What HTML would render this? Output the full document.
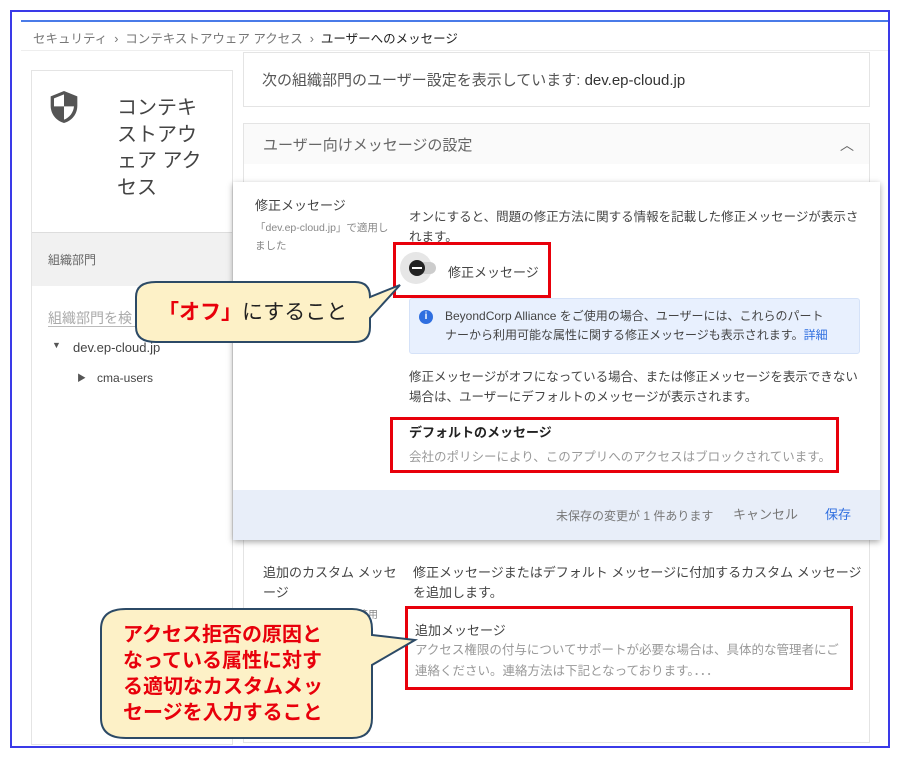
<!DOCTYPE html>
<html><head><meta charset="utf-8"><style>
*{margin:0;padding:0;box-sizing:border-box}
body{width:900px;height:760px;background:#fff;position:relative;overflow:hidden;font-family:"Liberation Sans","Noto Sans CJK JP",sans-serif;color:#3c4043}
.a{position:absolute;white-space:nowrap}
.card{position:absolute;background:#fff;border:1px solid #e4e4e4}
.red{position:absolute;border:3px solid #e8000b}
</style></head><body>
<div class="a" style="left:10px;top:10px;width:880px;height:738px;border:2px solid #3a3ae8"></div>
<div class="a" style="left:21px;top:20px;width:867px;height:2px;background:#4a7be8"></div>
<div class="a" style="left:33px;top:28px;font-size:12.5px;color:#777">セキュリティ &nbsp;›&nbsp; コンテキストアウェア アクセス &nbsp;›&nbsp; <span style="color:#222">ユーザーへのメッセージ</span></div>
<div class="a" style="left:21px;top:50px;width:867px;height:1px;background:#eee"></div>

<div class="card" style="left:31px;top:70px;width:202px;height:675px"></div>
<svg class="a" style="left:48px;top:89px" width="32" height="36" viewBox="0 0 24 26"><path d="M12 1L2 5v7c0 6.5 4.3 11.5 10 13 5.7-1.5 10-6.5 10-13V5z" fill="#555"/><path d="M12 3.5v9H4.5V6.5zM12 12.5h7.5c-.5 4.8-3.5 8.5-7.5 10z" fill="#fff"/></svg>
<div class="a" style="left:117px;top:95px;font-size:20px;line-height:26.5px;color:#444">コンテキ<br>ストアウ<br>ェア アク<br>セス</div>
<div class="a" style="left:32px;top:232px;width:200px;height:54px;background:#f1f1f1;border-top:1px solid #ddd"></div>
<div class="a" style="left:48px;top:251px;font-size:12px;color:#666">組織部門</div>
<div class="a" style="left:48px;top:308px;font-size:14px;color:#aaa">組織部門を検</div>
<div class="a" style="left:48px;top:326px;width:90px;height:1px;background:#bbb"></div>
<div class="a" style="left:52px;top:340px;font-size:9px;color:#555">▼</div>
<div class="a" style="left:73px;top:340px;font-size:13px;color:#444">dev.ep-cloud.jp</div>
<div class="a" style="left:77px;top:371px;font-size:9px;color:#555">▶</div>
<div class="a" style="left:97px;top:371px;font-size:12px;color:#444">cma-users</div>

<div class="card" style="left:243px;top:52px;width:627px;height:55px"></div>
<div class="a" style="left:262px;top:69px;font-size:15px;color:#555">次の組織部門のユーザー設定を表示しています: <span style="color:#333">dev.ep-cloud.jp</span></div>
<div class="card" style="left:243px;top:123px;width:627px;height:620px;background:#fafafa"></div>
<div class="a" style="left:263px;top:134px;font-size:15px;color:#666">ユーザー向けメッセージの設定</div>
<div class="a" style="left:840px;top:135px;font-size:14px;color:#666">︿</div>
<div class="a" style="left:244px;top:164px;width:625px;height:578px;background:#fff"></div>

<div class="a" style="left:233px;top:182px;width:647px;height:358px;background:#fff;box-shadow:0 2px 6px rgba(0,0,0,.35)"></div>
<div class="a" style="left:233px;top:490px;width:647px;height:50px;background:#e8eef9"></div>
<div class="a" style="left:255px;top:195px;font-size:13px;color:#444">修正メッセージ</div>
<div class="a" style="left:255px;top:219px;font-size:10.5px;line-height:18px;color:#888">「dev.ep-cloud.jp」で適用し<br>ました</div>
<div class="a" style="left:409px;top:207px;font-size:12.5px;line-height:20px;color:#444;white-space:normal;width:455px">オンにすると、問題の修正方法に関する情報を記載した修正メッセージが表示されます。</div>
<div class="red" style="left:393px;top:242px;width:158px;height:56px"></div>
<div class="a" style="left:400px;top:252px;width:32px;height:32px;border-radius:50%;background:#e6e6e6"></div>
<div class="a" style="left:416px;top:262px;width:20px;height:12px;border-radius:6px;background:#ccc"></div>
<div class="a" style="left:409px;top:260px;width:16px;height:16px;border-radius:50%;background:#222"></div>
<div class="a" style="left:412px;top:267px;width:10px;height:2px;background:#fff"></div>
<div class="a" style="left:448px;top:262px;font-size:13px;color:#444">修正メッセージ</div>
<div class="a" style="left:409px;top:298px;width:451px;height:56px;background:#e8f0fe;border:1px solid #d5e2f8;border-radius:3px"></div>
<div class="a" style="left:419px;top:310px;width:14px;height:14px;border-radius:50%;background:#2f6fe0;color:#fff;font-size:10px;font-weight:bold;text-align:center;line-height:14px">i</div>
<div class="a" style="left:445px;top:307px;font-size:12px;line-height:19px;color:#444">BeyondCorp Alliance をご使用の場合、ユーザーには、これらのパート<br>ナーから利用可能な属性に関する修正メッセージも表示されます。<span style="color:#2f6fe0">詳細</span></div>
<div class="a" style="left:409px;top:367px;font-size:12.5px;line-height:20px;color:#444">修正メッセージがオフになっている場合、または修正メッセージを表示できない<br>場合は、ユーザーにデフォルトのメッセージが表示されます。</div>
<div class="red" style="left:390px;top:417px;width:449px;height:56px"></div>
<div class="a" style="left:409px;top:422px;font-size:13px;font-weight:bold;color:#222">デフォルトのメッセージ</div>
<div class="a" style="left:409px;top:446px;font-size:12.5px;color:#999">会社のポリシーにより、このアプリへのアクセスはブロックされています。</div>
<div class="a" style="left:556px;top:507px;font-size:12px;color:#777">未保存の変更が 1 件あります</div>
<div class="a" style="left:733px;top:504px;font-size:13px;color:#777">キャンセル</div>
<div class="a" style="left:825px;top:504px;font-size:13px;color:#2f6fe0">保存</div>

<div class="a" style="left:263px;top:563px;font-size:13px;line-height:20px;color:#444">追加のカスタム メッセ<br>ージ</div>
<div class="a" style="left:358px;top:606px;font-size:10px;color:#888">適用</div>
<div class="a" style="left:413px;top:563px;font-size:13px;line-height:20px;color:#444">修正メッセージまたはデフォルト メッセージに付加するカスタム メッセージ<br>を追加します。</div>
<div class="red" style="left:405px;top:606px;width:448px;height:84px"></div>
<div class="a" style="left:415px;top:620px;font-size:13px;color:#444">追加メッセージ</div>
<div class="a" style="left:415px;top:640px;font-size:12.5px;line-height:21px;color:#999">アクセス権限の付与についてサポートが必要な場合は、具体的な管理者にご<br>連絡ください。連絡方法は下記となっております。．．．</div>

<svg class="a" style="left:0;top:0" width="900" height="760">
<path d="M156 282H355Q370 282 370 297L400 285L370 318V327Q370 342 355 342H156Q136 342 136 327V297Q136 282 156 282Z" fill="#fdf1c7" stroke="#2c4a66" stroke-width="2"/>
<path d="M126 609H352Q372 609 372 629V635L415 640L372 665V718Q372 738 352 738H126Q101 738 101 718V629Q101 609 126 609Z" fill="#fdf1c7" stroke="#2c4a66" stroke-width="2"/>
</svg>
<div class="a" style="left:158px;top:296px;font-size:21px;color:#222"><span style="color:#e8000b;font-weight:bold">「オフ」</span>にすること</div>
<div class="a" style="left:123px;top:622px;font-size:20px;line-height:26px;font-weight:bold;color:#e8000b">アクセス拒否の原因と<br>なっている属性に対す<br>る適切なカスタムメッ<br>セージを入力すること</div>
</body></html>
